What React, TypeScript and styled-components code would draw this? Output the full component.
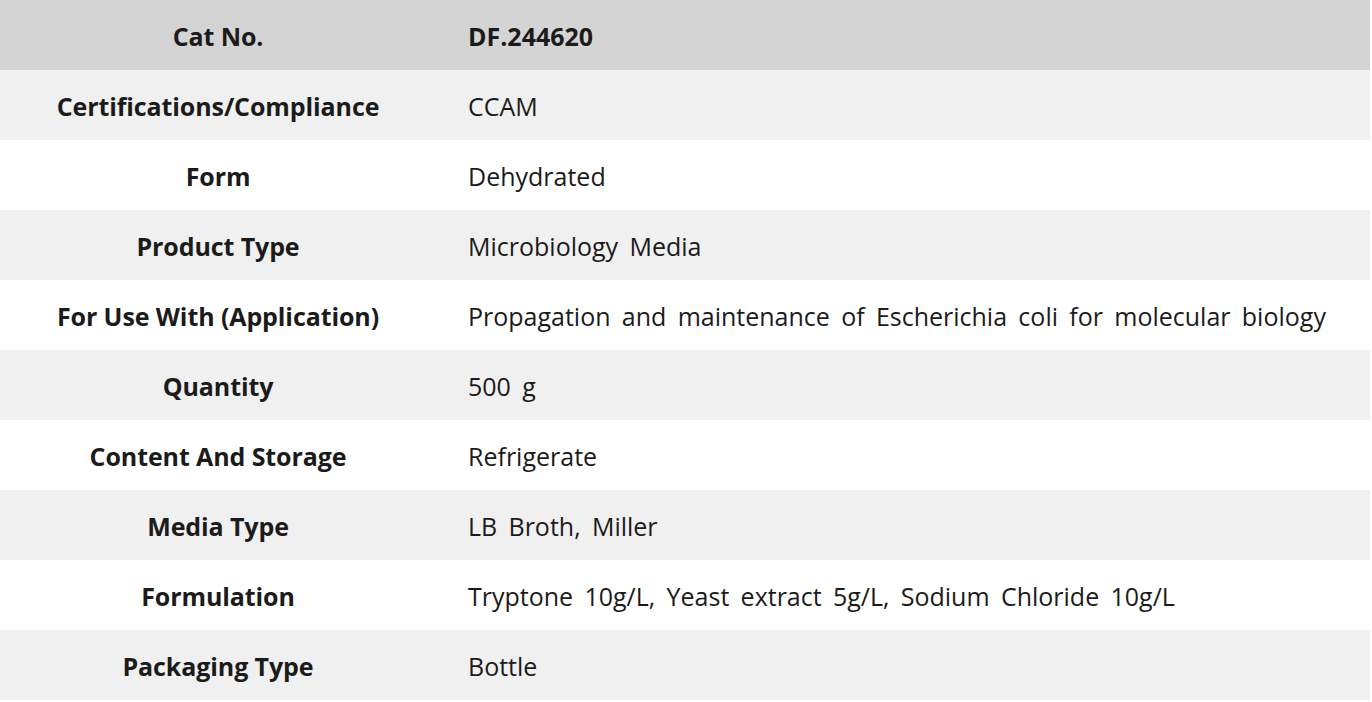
import React from "react";
import styled, { createGlobalStyle } from "styled-components";

const Global = createGlobalStyle`
  html, body { margin: 0; padding: 0; background: #ffffff; }
  body { font-family: "Open Sans", "Noto Sans CJK KR", sans-serif; color: #1b1b1b; }
`;

const Table = styled.div`
  width: 1370px;
  display: grid;
  grid-template-columns: 436px 1fr;
  grid-auto-rows: 70px;
`;

const Row = styled.div<{ $tone: "head" | "gray" | "white" }>`
  display: contents;
  & > div {
    background: ${(p) =>
      p.$tone === "head" ? "#d4d4d4" : p.$tone === "gray" ? "#f0f0f0" : "#ffffff"};
  }
`;

const Label = styled.div`
  box-sizing: border-box;
  padding-top: 1px;
  display: flex;
  align-items: center;
  justify-content: center;
  font-weight: 700;
  font-size: 25px;
  letter-spacing: -0.1px;
`;

const Value = styled.div<{ $bold?: boolean }>`
  box-sizing: border-box;
  padding-top: 1px;
  display: flex;
  align-items: center;
  padding-left: 32px;
  font-size: 25px;
  font-weight: ${(p) => (p.$bold ? 700 : 400)};
  word-spacing: 4.8px;
`;

const rows: [string, string][] = [
  ["Certifications/Compliance", "CCAM"],
  ["Form", "Dehydrated"],
  ["Product Type", "Microbiology Media"],
  ["For Use With (Application)", "Propagation and maintenance of Escherichia coli for molecular biology"],
  ["Quantity", "500 g"],
  ["Content And Storage", "Refrigerate"],
  ["Media Type", "LB Broth, Miller"],
  ["Formulation", "Tryptone 10g/L, Yeast extract 5g/L, Sodium Chloride 10g/L"],
  ["Packaging Type", "Bottle"],
];

export default function App() {
  return (
    <>
      <Global />
      <Table>
        <Row $tone="head">
          <Label>Cat No.</Label>
          <Value $bold>DF.244620</Value>
        </Row>
        {rows.map(([k, v], i) => (
          <Row key={k} $tone={i % 2 === 0 ? "gray" : "white"}>
            <Label>{k}</Label>
            <Value>{v}</Value>
          </Row>
        ))}
      </Table>
    </>
  );
}
